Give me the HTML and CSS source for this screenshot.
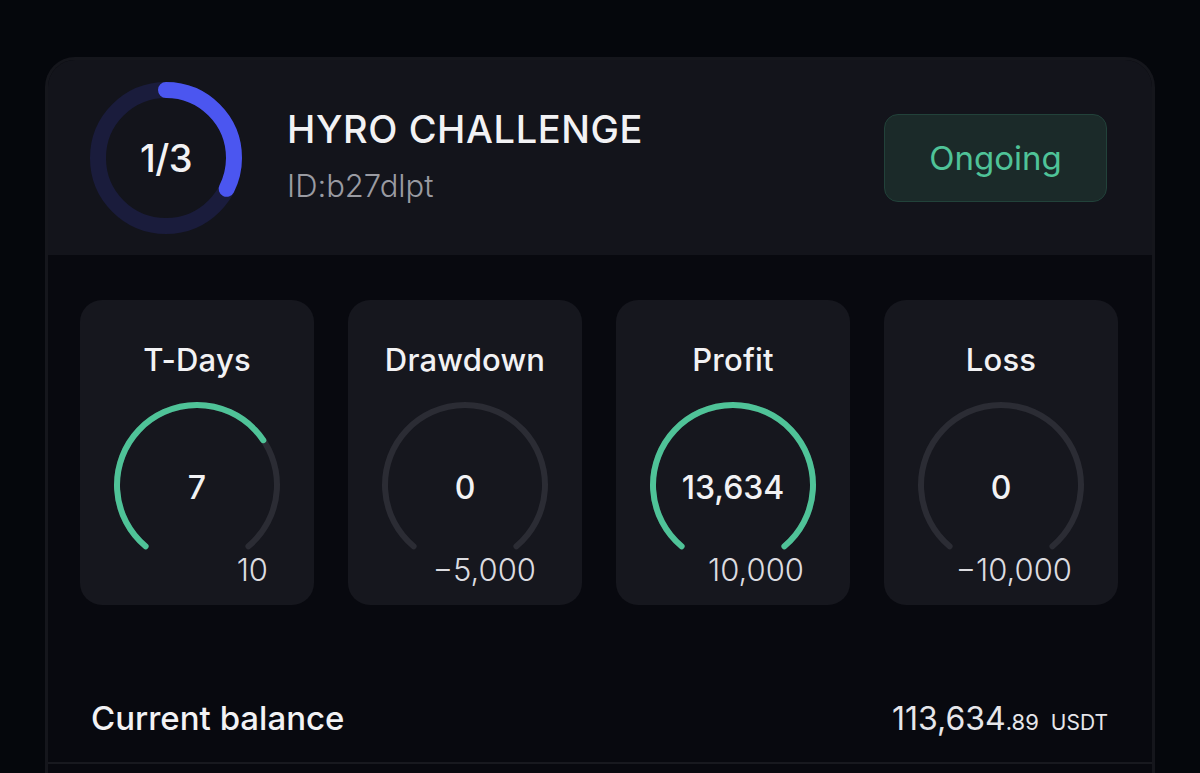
FILE: index.html
```html
<!DOCTYPE html>
<html lang="en">
<head>
  <meta charset="UTF-8" />
  <meta name="viewport" content="width=device-width, initial-scale=1.0"/>
  <title>Hyro Challenge</title>
  <link rel="stylesheet" href="styles.css">
</head>
<body>

  <div class="challenge-card">
    <!-- header: phase ring, name, status -->
    <div class="challenge-head">
      <div class="phase-ring">
        <svg width="152" height="152" viewBox="0 0 152 152">
          <circle cx="76" cy="76" r="68" fill="none" stroke="#1a1c3c" stroke-width="16"/>
          <circle cx="76" cy="76" r="68" fill="none" stroke="#4b56f0" stroke-width="16"
                  stroke-linecap="round" pathLength="100" stroke-dasharray="32.5 100"
                  transform="rotate(-90 76 76)"/>
        </svg>
        <span class="phase-text">1/3</span>
      </div>
      <div class="challenge-title">
        <div class="challenge-name">HYRO CHALLENGE</div>
        <div class="challenge-id">ID:b27dlpt</div>
      </div>
      <div class="status-badge">Ongoing</div>
    </div>

    <!-- gauges -->
    <div class="challenge-body">
      <div class="gauge-grid">
        <div class="gauge-card">
          <div class="gauge-title">T-Days</div>
          <div class="gauge">
            <svg width="172" height="152" viewBox="0 0 172 152">
              <path class="track" d="M 34.58 147.28 A 80 80 0 1 1 137.42 147.28"/>
              <path class="fill" pathLength="100" stroke-dasharray="70 100" d="M 34.58 147.28 A 80 80 0 1 1 137.42 147.28"/>
            </svg>
            <span class="gauge-value">7</span>
          </div>
          <div class="gauge-limit">10</div>
        </div>

        <div class="gauge-card">
          <div class="gauge-title">Drawdown</div>
          <div class="gauge">
            <svg width="172" height="152" viewBox="0 0 172 152">
              <path class="track" d="M 34.58 147.28 A 80 80 0 1 1 137.42 147.28"/>
            </svg>
            <span class="gauge-value">0</span>
          </div>
          <div class="gauge-limit">−5,000</div>
        </div>

        <div class="gauge-card">
          <div class="gauge-title">Profit</div>
          <div class="gauge">
            <svg width="172" height="152" viewBox="0 0 172 152">
              <path class="track" d="M 34.58 147.28 A 80 80 0 1 1 137.42 147.28"/>
              <path class="fill" pathLength="100" stroke-dasharray="100 100" d="M 34.58 147.28 A 80 80 0 1 1 137.42 147.28"/>
            </svg>
            <span class="gauge-value">13,634</span>
          </div>
          <div class="gauge-limit">10,000</div>
        </div>

        <div class="gauge-card">
          <div class="gauge-title">Loss</div>
          <div class="gauge">
            <svg width="172" height="152" viewBox="0 0 172 152">
              <path class="track" d="M 34.58 147.28 A 80 80 0 1 1 137.42 147.28"/>
            </svg>
            <span class="gauge-value">0</span>
          </div>
          <div class="gauge-limit">−10,000</div>
        </div>
      </div>

      <div class="balance-row">
        <span class="balance-label">Current balance</span>
        <span class="balance-value">113,634<small>.89</small><em>USDT</em></span>
      </div>
      <div class="next-row"></div>
    </div>
  </div>

</body>
</html>
```

FILE: styles.css
```css
* { margin: 0; padding: 0; box-sizing: border-box; }
html, body {
  width: 100%;
  height: 100%;
  overflow: hidden;
  background: #05070c;
  font-family: 'Inter', 'Noto Sans', sans-serif;
  color: #f2f2f4;
}

body { padding-top: 57px; }

.challenge-card {
  width: 1110px;
  margin: 0 auto;
  border: 3px solid #15161c;
  border-bottom: none;
  border-radius: 30px 30px 0 0;
  overflow: hidden;
  background: #08090f;
}

/* header */
.challenge-head {
  height: 195px;
  display: flex;
  align-items: center;
  padding: 0 45px 0 42px;
  background: #13141b;
}

.phase-ring {
  position: relative;
  width: 152px;
  height: 152px;
  flex-shrink: 0;
}
.phase-ring svg { display: block; }
.phase-text {
  position: absolute;
  inset: 0;
  display: flex;
  align-items: center;
  justify-content: center;
  font-size: 38px;
  font-weight: 500;
  letter-spacing: -0.5px;
}

.challenge-title { margin-left: 45px; margin-top: -4px; }
.challenge-name {
  font-size: 38px;
  font-weight: 500;
  line-height: 44px;
  letter-spacing: 0.6px;
}
.challenge-id {
  margin-top: 17px;
  font-size: 31px;
  font-weight: 300;
  color: #9a9ba2;
  line-height: 36px;
}

.status-badge {
  margin-left: auto;
  width: 223px;
  height: 88px;
  display: flex;
  align-items: center;
  justify-content: center;
  border-radius: 14px;
  background: #1b2a29;
  border: 1px solid #22423a;
  color: #4fc398;
  font-size: 33px;
  font-weight: 400;
}

/* gauges */
.gauge-grid {
  display: grid;
  grid-template-columns: repeat(4, 1fr);
  gap: 34px;
  padding: 45px 34px 0 32px;
}

.gauge-card {
  height: 305px;
  padding: 42px 0 0;
  border-radius: 22px;
  background: #16171e;
  display: flex;
  flex-direction: column;
  align-items: center;
}

.gauge-title {
  font-size: 31px;
  font-weight: 500;
  line-height: 36px;
  letter-spacing: 0.2px;
}

.gauge {
  position: relative;
  margin-top: 21px;
  width: 172px;
  height: 152px;
}
.gauge svg { display: block; }
.gauge .track, .gauge .fill {
  fill: none;
  stroke-width: 6;
  stroke-linecap: round;
}
.gauge .track { stroke: #2b2c34; }
.gauge .fill { stroke: #4fc398; }

.gauge-value {
  position: absolute;
  left: 0;
  right: 0;
  top: 70px;
  text-align: center;
  font-size: 32px;
  font-weight: 500;
  line-height: 38px;
}

.gauge-limit {
  align-self: flex-end;
  margin-top: 1px;
  padding-right: 46px;
  font-size: 31px;
  font-weight: 300;
  line-height: 36px;
  color: #dcdce0;
}

/* balance */
.balance-row {
  display: flex;
  align-items: baseline;
  justify-content: space-between;
  padding: 93px 44px 24px 43px;
  border-bottom: 2px solid #18191f;
}
.balance-label {
  font-size: 33px;
  font-weight: 500;
  line-height: 40px;
}
.balance-value {
  font-size: 32px;
  font-weight: 400;
  color: #e6e6ea;
}
.balance-value small { font-size: 22px; }
.balance-value em {
  font-style: normal;
  font-size: 21px;
  margin-left: 12px;
}

.next-row { height: 60px; }
```
